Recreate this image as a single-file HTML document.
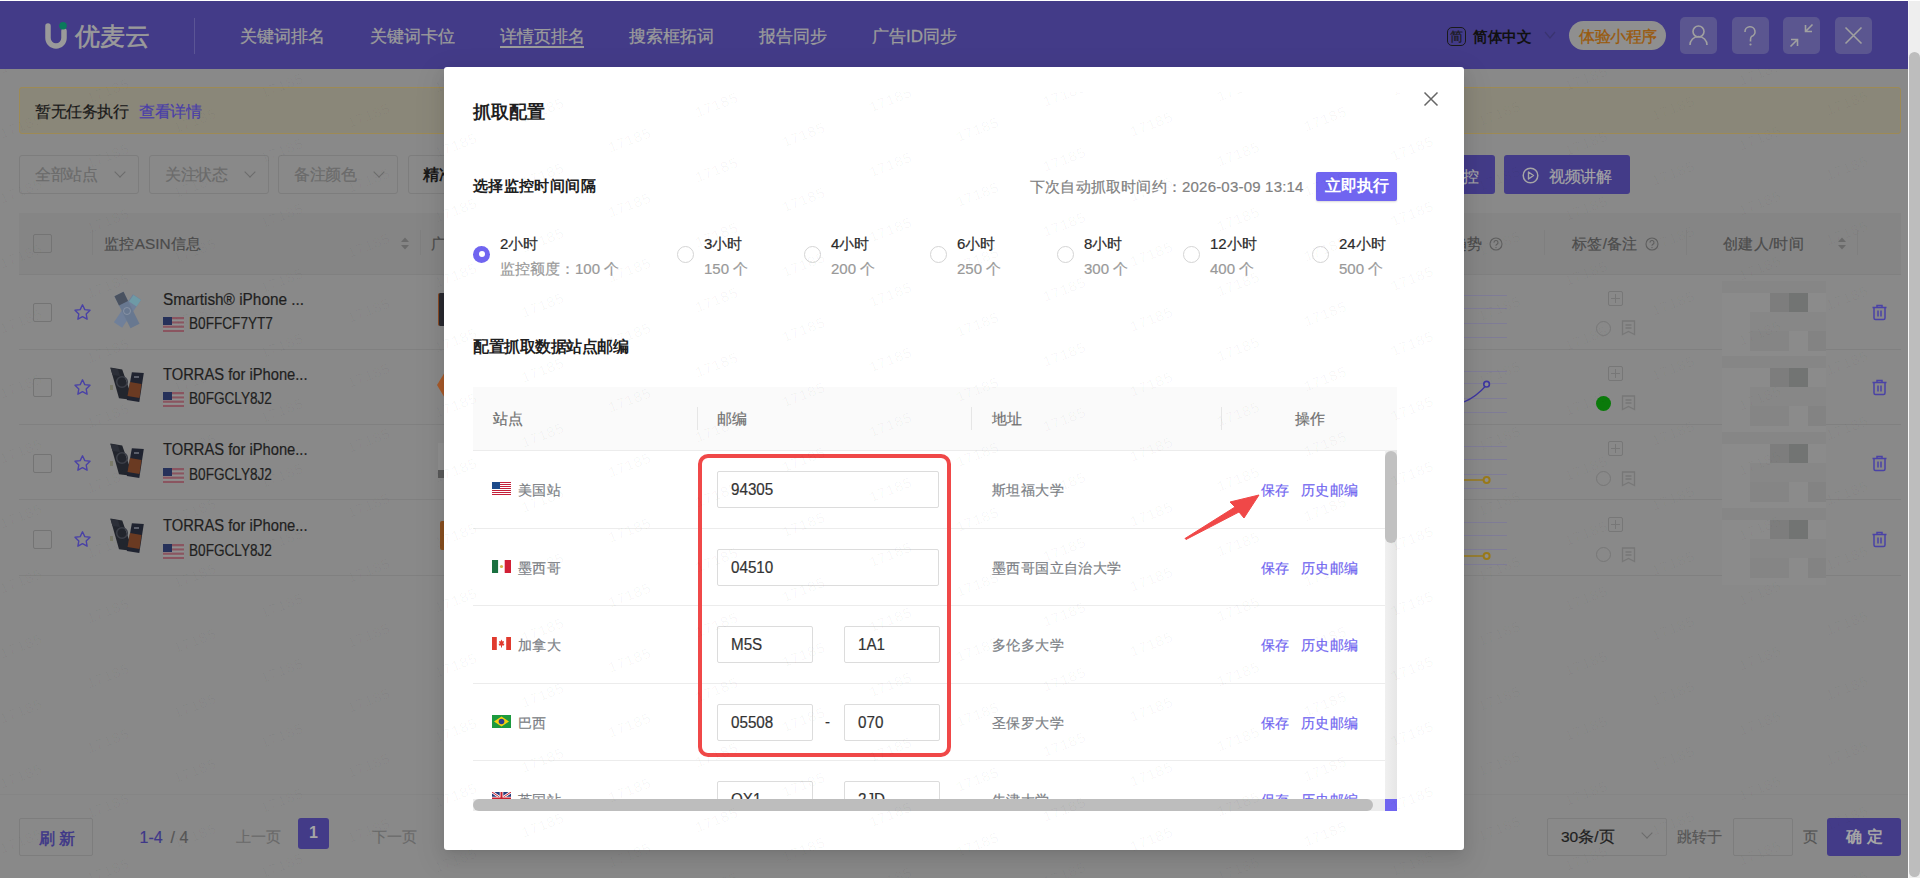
<!DOCTYPE html>
<html><head><meta charset="utf-8">
<style>
*{box-sizing:border-box;margin:0;padding:0}
html,body{width:1920px;height:878px;overflow:hidden}
body{background:#898989;font-family:"Liberation Sans",sans-serif;position:relative;color:#222}
.a{position:absolute;white-space:nowrap;-webkit-text-stroke-width:.2px}
.t{line-height:20px;height:20px}
/* header */
#hdr{left:0;top:1px;width:1908px;height:68px;background:#433B88}
.nav{top:27px;font-size:17px;color:#9b9b9b;line-height:20px;-webkit-text-stroke:.3px #9b9b9b}
.hbtn{top:17px;width:37px;height:37px;border-radius:5px;background:#5b5690}
.hbtn svg{position:absolute;left:0;top:0}
/* page */
.sel{top:155px;height:39px;border:1px solid #7d7d7d;border-radius:3px;width:120px}
.sel span{position:absolute;left:15px;top:9px;font-size:16px;line-height:20px;color:#6b6b6b;transform:scale(.97);transform-origin:0 0}
.chev{position:absolute;width:8px;height:8px;border-right:1px solid #6b6b6b;border-bottom:1px solid #6b6b6b;transform:rotate(45deg)}
.cb{width:19px;height:19px;border:1px solid #747474;border-radius:2px}
.inp{height:37px;border:1px solid #dcdcdc;border-radius:2px;background:#fff}
.inp span{position:absolute;left:13px;top:8px;font-size:16px;line-height:20px;color:#333;transform:scaleX(.95);transform-origin:0 0}
#mask{left:0;top:0;width:1908px;height:878px}
#modal{left:444px;top:67px;width:1020px;height:783px;background:#fff;border-radius:3px;box-shadow:0 3px 6px -4px rgba(0,0,0,.12),0 6px 16px 0 rgba(0,0,0,.08),0 9px 28px 8px rgba(0,0,0,.05);overflow:hidden}
#sb{left:1908px;top:1px;width:12px;height:877px;background:#eeeeee;border-left:1px solid #fafafa}
#topline{left:0;top:0;width:1920px;height:1px;background:#fff}
#sbthumb{left:1909px;top:52px;width:11px;height:825px;background:#bdbdbd;border-radius:6px}
</style></head><body>

<!-- ================= HEADER ================= -->
<div id="hdr" class="a">
</div>
<!-- logo -->
<svg class="a" style="left:43px;top:18px" width="30" height="34" viewBox="0 0 30 34">
  <path d="M5 8 V20 A8 8 0 0 0 21 20 V13" fill="none" stroke="#9a9a9a" stroke-width="5.5" stroke-linecap="round"/>
  <circle cx="20" cy="7.8" r="3.8" fill="#0b7a5c"/>
</svg>
<div class="a" style="left:75px;top:21px;font-size:25px;line-height:30px;color:#9a9a9a;-webkit-text-stroke:.6px #9a9a9a">优麦云</div>
<div class="a" style="left:194px;top:18px;width:1px;height:36px;background:#5b5595"></div>
<div class="a nav" style="left:240px">关键词排名</div>
<div class="a nav" style="left:370px">关键词卡位</div>
<div class="a nav" style="left:500px">详情页排名</div>
<div class="a" style="left:500px;top:46px;width:84px;height:2px;background:#9b9b9b"></div>
<div class="a nav" style="left:629px">搜索框拓词</div>
<div class="a nav" style="left:759px">报告同步</div>
<div class="a nav" style="left:872px">广告ID同步</div>

<!-- language -->
<div class="a" style="left:1447px;top:27px;width:19px;height:19px;border:1.5px solid #1a1a1a;border-radius:5px"></div>
<div class="a" style="left:1450px;top:29px;font-size:13px;line-height:15px;color:#1a1a1a">简</div>
<div class="a" style="left:1472.5px;top:27px;font-size:15px;line-height:20px;font-weight:bold;-webkit-text-stroke-width:0;color:#111;transform:scaleX(.97);transform-origin:0 0">简体中文</div>
<svg class="a" style="left:1544px;top:31px" width="12" height="9"><path d="M1 1 L6 7 L11 1" fill="none" stroke="#3a3470" stroke-width="1.2"/></svg>
<div class="a" style="left:1569px;top:21px;width:97px;height:29px;border-radius:15px;background:#8f8f8f"></div>
<div class="a" style="left:1578.5px;top:27px;font-size:16px;line-height:20px;color:#9a5a0c;-webkit-text-stroke:.3px #9a5a0c;transform:scale(.97);transform-origin:0 0">体验小程序</div>
<!-- header buttons -->
<div class="a hbtn" style="left:1680px">
 <svg width="37" height="37"><circle cx="18.5" cy="14.5" r="5.5" fill="none" stroke="#a0a0a0" stroke-width="1.6"/><path d="M10 28 A8.5 8.5 0 0 1 27 28" fill="none" stroke="#a0a0a0" stroke-width="1.6"/></svg>
</div>
<div class="a hbtn" style="left:1732px">
 <svg width="37" height="37"><path d="M13 15 A5 5 0 1 1 19.5 19.5 Q18.5 20.5 18.5 23 V24.5" fill="none" stroke="#a0a0a0" stroke-width="1.6"/><circle cx="18.5" cy="27.5" r="1.1" fill="#a0a0a0"/></svg>
</div>
<div class="a hbtn" style="left:1783px">
 <svg width="37" height="37"><path d="M22.5 8 V14.5 H29 M22.5 14.5 L29.5 7.5 M14.5 29 V22.5 H8 M14.5 22.5 L7.5 29.5" fill="none" stroke="#a0a0a0" stroke-width="1.6"/></svg>
</div>
<div class="a hbtn" style="left:1835px">
 <svg width="37" height="37"><path d="M10.5 10.5 L26.5 26.5 M26.5 10.5 L10.5 26.5" fill="none" stroke="#a0a0a0" stroke-width="1.6"/></svg>
</div>


<!-- ================= PAGE ================= -->
<div id="page">
<div class="a" style="left:19px;top:87px;width:1882px;height:47px;background:#8a8779;border:1px solid #9d8a55;border-radius:3px"></div>
<div class="a" style="left:35px;top:101.5px;font-size:16px;line-height:20px;color:#1a1a1a;transform:scale(0.97);transform-origin:0 0;">暂无任务执行</div>
<div class="a" style="left:138.5px;top:101.5px;font-size:16px;line-height:20px;color:#4a3fa8;transform:scale(0.97);transform-origin:0 0;">查看详情</div>
<div class="a sel" style="left:19px;width:120px"><span>全部站点</span><i class="chev" style="left:96px;top:12px"></i></div>
<div class="a sel" style="left:149px;width:120px"><span>关注状态</span><i class="chev" style="left:96px;top:12px"></i></div>
<div class="a sel" style="left:278px;width:120px"><span>备注颜色</span><i class="chev" style="left:96px;top:12px"></i></div>
<div class="a sel" style="left:408px;width:120px"><span style="color:#1a1a1a;font-weight:bold;-webkit-text-stroke-width:0;left:14px">精准搜索</span></div>
<div class="a" style="left:1380px;top:155px;width:115px;height:39px;background:#433B88;border-radius:3px"></div>
<div class="a" style="left:1416px;top:167px;font-size:16px;line-height:20px;color:#a5a5a5;transform:scale(0.97);transform-origin:0 0;font-weight:500">开启监控</div>
<div class="a" style="left:1504px;top:155px;width:126px;height:39px;background:#433B88;border-radius:3px"></div>
<svg class="a" style="left:1521px;top:166px" width="19" height="19"><circle cx="9.5" cy="9.5" r="7.3" fill="none" stroke="#a5a5a5" stroke-width="1.5"/><path d="M7.5 6 L12.5 9.5 L7.5 13 Z" fill="none" stroke="#a5a5a5" stroke-width="1.4" stroke-linejoin="round"/></svg>
<div class="a" style="left:1549px;top:167px;font-size:16px;line-height:20px;color:#a5a5a5;transform:scale(0.97);transform-origin:0 0;font-weight:500">视频讲解</div>
<div class="a" style="left:19px;top:213px;width:1882px;height:61px;background:#858585;"></div>
<div class="a" style="left:19px;top:274px;width:1882px;height:1px;background:#808080;"></div>
<div class="a cb" style="left:33px;top:234px"></div>
<div class="a" style="left:92px;top:230px;width:1px;height:25px;background:#7f7f7f;"></div>
<div class="a" style="left:420px;top:230px;width:1px;height:25px;background:#7f7f7f;"></div>
<div class="a" style="left:1544px;top:230px;width:1px;height:25px;background:#7f7f7f;"></div>
<div class="a" style="left:1686px;top:230px;width:1px;height:25px;background:#7f7f7f;"></div>
<div class="a" style="left:1857px;top:230px;width:1px;height:25px;background:#7f7f7f;"></div>
<div class="a" style="left:104px;top:234.5px;font-size:16px;line-height:20px;color:#4b4b4b;transform:scale(0.96);transform-origin:0 0;">监控ASIN信息</div>
<svg class="a" style="left:400px;top:236px" width="10" height="15"><path d="M1 6 L5 1.5 L9 6 Z M1 9 L5 13.5 L9 9 Z" fill="#6a6a6a"/></svg>
<div class="a" style="left:431px;top:234.5px;font-size:16px;line-height:20px;color:#4b4b4b;transform:scale(0.96);transform-origin:0 0;">广告</div>
<div class="a" style="left:1452px;top:234.5px;font-size:16px;line-height:20px;color:#4b4b4b;transform:scale(0.96);transform-origin:0 0;">趋势</div>
<svg class="a" style="left:1489px;top:237px" width="14" height="14"><circle cx="7" cy="7" r="6" fill="none" stroke="#5e5e5e" stroke-width="1.1"/><path d="M5 5.6 A2 2 0 1 1 7.6 7.4 Q7 7.8 7 8.8" fill="none" stroke="#5e5e5e" stroke-width="1.1"/><circle cx="7" cy="10.6" r=".7" fill="#5e5e5e"/></svg>
<div class="a" style="left:1572px;top:234.5px;font-size:16px;line-height:20px;color:#4b4b4b;transform:scale(0.96);transform-origin:0 0;">标签/备注</div>
<svg class="a" style="left:1645px;top:237px" width="14" height="14"><circle cx="7" cy="7" r="6" fill="none" stroke="#5e5e5e" stroke-width="1.1"/><path d="M5 5.6 A2 2 0 1 1 7.6 7.4 Q7 7.8 7 8.8" fill="none" stroke="#5e5e5e" stroke-width="1.1"/><circle cx="7" cy="10.6" r=".7" fill="#5e5e5e"/></svg>
<div class="a" style="left:1723px;top:234.5px;font-size:16px;line-height:20px;color:#4b4b4b;transform:scale(0.96);transform-origin:0 0;">创建人/时间</div>
<svg class="a" style="left:1837px;top:236px" width="10" height="15"><path d="M1 6 L5 1.5 L9 6 Z M1 9 L5 13.5 L9 9 Z" fill="#6a6a6a"/></svg>
<div class="a" style="left:19px;top:348.6px;width:1882px;height:1px;background:#808080;"></div>
<div class="a cb" style="left:33px;top:303.0px"></div>
<svg class="a" style="left:73px;top:303.0px" width="19" height="19" viewBox="0 0 19 19"><path d="M9.5 1.8 L11.8 6.6 L17 7.3 L13.2 11 L14.1 16.2 L9.5 13.7 L4.9 16.2 L5.8 11 L2 7.3 L7.2 6.6 Z" fill="none" stroke="#4a42a6" stroke-width="1.4" stroke-linejoin="round"/></svg>
<svg class="a" style="left:100px;top:285.0px" width="50" height="50" viewBox="100 285 50 50"><path d="M141.1 299.8 L132.9 294.2 L113.9 322.2 L122.1 327.8 Z" fill="#70809a"/><path d="M141 300 L133.5 295 L129 301.5 L136.5 306.5Z" fill="#6e9aa6"/><path d="M114.5 296.2 L123.5 291.8 L139.5 323.8 L130.5 328.2 Z" fill="#687890"/><path d="M114.5 296.2 L123.5 291.8 L128 301 L119 305.4 Z" fill="#4a5260"/><circle cx="127" cy="311" r="3.5" fill="none" stroke="#8e98a8" stroke-width=".8"/></svg>
<div class="a" style="left:163px;top:289.5px;font-size:16px;line-height:20px;color:#1f1f1f;transform:scaleX(0.96);transform-origin:0 0">Smartish® iPhone ...</div>
<svg class="a" style="left:163px;top:317.0px" width="21" height="15" viewBox="0 0 21 15"><rect width="21" height="15" fill="#8a5560"/><rect y="2.3" width="21" height="2.1" fill="#8f8f8f"/><rect y="6.5" width="21" height="2.1" fill="#8f8f8f"/><rect y="10.8" width="21" height="2.1" fill="#8f8f8f"/><rect width="9" height="8" fill="#26315a"/></svg>
<div class="a" style="left:188.5px;top:314.0px;font-size:16px;line-height:20px;color:#1f1f1f;transform:scaleX(.85);transform-origin:0 0">B0FFCF7YT7</div>
<div class="a" style="left:438px;top:293px;width:8px;height:33px;background:#2a2a30;border-radius:2px;border-left:1.5px solid #8a4a22"></div>
<div class="a" style="left:1464px;top:295.4px;width:43px;height:1px;background:#7f7c96;"></div>
<div class="a" style="left:1464px;top:308.0px;width:43px;height:1px;background:#7f7c96;"></div>
<div class="a" style="left:1464px;top:322.7px;width:43px;height:1px;background:#7f7c96;"></div>
<div class="a" style="left:1464px;top:337.0px;width:43px;height:1px;background:#7f7c96;"></div>
<div class="a" style="left:1608px;top:290.5px;width:15px;height:15px;background:transparent;border:1px solid #777;border-radius:2px"></div>
<div class="a" style="left:1611px;top:297.5px;width:9px;height:1px;background:#777;"></div>
<div class="a" style="left:1615px;top:293.5px;width:1px;height:9px;background:#777;"></div>
<div class="a" style="left:1596px;top:320.5px;width:15px;height:15px;background:transparent;border-radius:50%;border:1.3px solid #777"></div>
<svg class="a" style="left:1621px;top:320.0px" width="15" height="16" viewBox="0 0 15 16"><path d="M1.5 1 H13.5 V14.5 L7.5 11.5 L1.5 14.5 Z M4.5 5 H10.5 M4.5 8 H10.5" fill="none" stroke="#777" stroke-width="1.3"/></svg>
<div class="a" style="left:1722px;top:281.0px;width:104px;height:77px;background:#8b8b8b;"></div>
<div class="a" style="left:1722px;top:281.0px;width:104px;height:12px;background:#868686;"></div>
<div class="a" style="left:1770px;top:293.0px;width:19px;height:19px;background:#7d7d7d;"></div>
<div class="a" style="left:1789px;top:293.0px;width:19px;height:19px;background:#727473;"></div>
<div class="a" style="left:1750px;top:312.0px;width:76px;height:19px;background:#878787;"></div>
<div class="a" style="left:1750px;top:331.0px;width:39px;height:20px;background:#858585;"></div>
<div class="a" style="left:1808px;top:331.0px;width:18px;height:20px;background:#838383;"></div>
<svg class="a" style="left:1870px;top:303.0px" width="19" height="19" viewBox="0 0 19 19"><path d="M2.5 4.5 H16.5 M7 4.5 V2.5 H12 V4.5 M4 4.5 V15 Q4 16.5 5.5 16.5 H13.5 Q15 16.5 15 15 V4.5 M8 7.5 V13.5 M11 7.5 V13.5" fill="none" stroke="#4a42a6" stroke-width="1.5"/></svg>
<div class="a" style="left:19px;top:423.7px;width:1882px;height:1px;background:#808080;"></div>
<div class="a cb" style="left:33px;top:378.1px"></div>
<svg class="a" style="left:73px;top:378.1px" width="19" height="19" viewBox="0 0 19 19"><path d="M9.5 1.8 L11.8 6.6 L17 7.3 L13.2 11 L14.1 16.2 L9.5 13.7 L4.9 16.2 L5.8 11 L2 7.3 L7.2 6.6 Z" fill="none" stroke="#4a42a6" stroke-width="1.4" stroke-linejoin="round"/></svg>
<svg class="a" style="left:100px;top:360.0px" width="50" height="50" viewBox="100 360 50 50"><path d="M110.3 367.4 L122.2 369.4 L133 400 L119 398.2 Z" fill="#22252d"/><circle cx="122" cy="382" r="5.3" fill="none" stroke="#3c3f48" stroke-width="1.6"/><path d="M110.5 368 L118 369.3 L120 376 L112.5 375Z" fill="#2c2f38"/><path d="M131.9 372.2 L143.8 373.1 L139.3 402.1 L126.8 399.9 Z" fill="#1f2330"/><path d="M130 382 L141.5 384 L139.5 398 L127.5 396 Z" fill="#6a3a22"/><rect x="134" y="376" width="5" height="2" fill="#5a5e6a"/><rect x="110" y="385" width="3" height="5" fill="#7a7a6a"/></svg>
<div class="a" style="left:163px;top:364.6px;font-size:16px;line-height:20px;color:#1f1f1f;transform:scaleX(0.92);transform-origin:0 0">TORRAS for iPhone...</div>
<svg class="a" style="left:163px;top:392.1px" width="21" height="15" viewBox="0 0 21 15"><rect width="21" height="15" fill="#8a5560"/><rect y="2.3" width="21" height="2.1" fill="#8f8f8f"/><rect y="6.5" width="21" height="2.1" fill="#8f8f8f"/><rect y="10.8" width="21" height="2.1" fill="#8f8f8f"/><rect width="9" height="8" fill="#26315a"/></svg>
<div class="a" style="left:188.5px;top:389.1px;font-size:16px;line-height:20px;color:#1f1f1f;transform:scaleX(.85);transform-origin:0 0">B0FGCLY8J2</div>
<svg class="a" style="left:436px;top:371px" width="10" height="30"><path d="M1 14 L9 1 L10 29 Z" fill="#a85a2a"/></svg>
<div class="a" style="left:1464px;top:370.5px;width:43px;height:1px;background:#7f7c96;"></div>
<div class="a" style="left:1464px;top:383.1px;width:43px;height:1px;background:#7f7c96;"></div>
<div class="a" style="left:1464px;top:397.8px;width:43px;height:1px;background:#7f7c96;"></div>
<div class="a" style="left:1464px;top:412.1px;width:43px;height:1px;background:#7f7c96;"></div>
<svg class="a" style="left:1464px;top:375.1px" width="30" height="30"><path d="M0 27 Q12 22 22.6 10" fill="none" stroke="#3e36a0" stroke-width="1.3"/><circle cx="22.6" cy="9.2" r="2.8" fill="#8f8f8f" stroke="#3e36a0" stroke-width="1.6"/></svg>
<div class="a" style="left:1608px;top:365.6px;width:15px;height:15px;background:transparent;border:1px solid #777;border-radius:2px"></div>
<div class="a" style="left:1611px;top:372.6px;width:9px;height:1px;background:#777;"></div>
<div class="a" style="left:1615px;top:368.6px;width:1px;height:9px;background:#777;"></div>
<div class="a" style="left:1596px;top:395.6px;width:15px;height:15px;background:#0a7a0a;border-radius:50%"></div>
<svg class="a" style="left:1621px;top:395.1px" width="15" height="16" viewBox="0 0 15 16"><path d="M1.5 1 H13.5 V14.5 L7.5 11.5 L1.5 14.5 Z M4.5 5 H10.5 M4.5 8 H10.5" fill="none" stroke="#777" stroke-width="1.3"/></svg>
<div class="a" style="left:1722px;top:356.1px;width:104px;height:77px;background:#8b8b8b;"></div>
<div class="a" style="left:1722px;top:356.1px;width:104px;height:12px;background:#868686;"></div>
<div class="a" style="left:1770px;top:368.1px;width:19px;height:19px;background:#7d7d7d;"></div>
<div class="a" style="left:1789px;top:368.1px;width:19px;height:19px;background:#727473;"></div>
<div class="a" style="left:1750px;top:387.1px;width:76px;height:19px;background:#878787;"></div>
<div class="a" style="left:1750px;top:406.1px;width:39px;height:20px;background:#858585;"></div>
<div class="a" style="left:1808px;top:406.1px;width:18px;height:20px;background:#838383;"></div>
<svg class="a" style="left:1870px;top:378.1px" width="19" height="19" viewBox="0 0 19 19"><path d="M2.5 4.5 H16.5 M7 4.5 V2.5 H12 V4.5 M4 4.5 V15 Q4 16.5 5.5 16.5 H13.5 Q15 16.5 15 15 V4.5 M8 7.5 V13.5 M11 7.5 V13.5" fill="none" stroke="#4a42a6" stroke-width="1.5"/></svg>
<div class="a" style="left:19px;top:499.4px;width:1882px;height:1px;background:#808080;"></div>
<div class="a cb" style="left:33px;top:453.8px"></div>
<svg class="a" style="left:73px;top:453.8px" width="19" height="19" viewBox="0 0 19 19"><path d="M9.5 1.8 L11.8 6.6 L17 7.3 L13.2 11 L14.1 16.2 L9.5 13.7 L4.9 16.2 L5.8 11 L2 7.3 L7.2 6.6 Z" fill="none" stroke="#4a42a6" stroke-width="1.4" stroke-linejoin="round"/></svg>
<svg class="a" style="left:100px;top:435.70000000000005px" width="50" height="50" viewBox="100 360 50 50"><path d="M110.3 367.4 L122.2 369.4 L133 400 L119 398.2 Z" fill="#22252d"/><circle cx="122" cy="382" r="5.3" fill="none" stroke="#3c3f48" stroke-width="1.6"/><path d="M110.5 368 L118 369.3 L120 376 L112.5 375Z" fill="#2c2f38"/><path d="M131.9 372.2 L143.8 373.1 L139.3 402.1 L126.8 399.9 Z" fill="#1f2330"/><path d="M130 382 L141.5 384 L139.5 398 L127.5 396 Z" fill="#6a3a22"/><rect x="134" y="376" width="5" height="2" fill="#5a5e6a"/><rect x="110" y="385" width="3" height="5" fill="#7a7a6a"/></svg>
<div class="a" style="left:163px;top:440.3px;font-size:16px;line-height:20px;color:#1f1f1f;transform:scaleX(0.92);transform-origin:0 0">TORRAS for iPhone...</div>
<svg class="a" style="left:163px;top:467.8px" width="21" height="15" viewBox="0 0 21 15"><rect width="21" height="15" fill="#8a5560"/><rect y="2.3" width="21" height="2.1" fill="#8f8f8f"/><rect y="6.5" width="21" height="2.1" fill="#8f8f8f"/><rect y="10.8" width="21" height="2.1" fill="#8f8f8f"/><rect width="9" height="8" fill="#26315a"/></svg>
<div class="a" style="left:188.5px;top:464.8px;font-size:16px;line-height:20px;color:#1f1f1f;transform:scaleX(.85);transform-origin:0 0">B0FGCLY8J2</div>
<div class="a" style="left:438px;top:443px;width:8px;height:35px;background:#8f8f8f;"></div>
<div class="a" style="left:438px;top:470px;width:8px;height:8px;background:#5a5a5a;"></div>
<div class="a" style="left:1464px;top:446.2px;width:43px;height:1px;background:#7f7c96;"></div>
<div class="a" style="left:1464px;top:458.8px;width:43px;height:1px;background:#7f7c96;"></div>
<div class="a" style="left:1464px;top:473.5px;width:43px;height:1px;background:#7f7c96;"></div>
<div class="a" style="left:1464px;top:487.8px;width:43px;height:1px;background:#7f7c96;"></div>
<svg class="a" style="left:1464px;top:473.8px" width="30" height="30"><path d="M0 6 H20" fill="none" stroke="#9a7a1a" stroke-width="1.5"/><circle cx="22.6" cy="6" r="3" fill="#8f8f8f" stroke="#9a7a1a" stroke-width="2"/></svg>
<div class="a" style="left:1608px;top:441.3px;width:15px;height:15px;background:transparent;border:1px solid #777;border-radius:2px"></div>
<div class="a" style="left:1611px;top:448.3px;width:9px;height:1px;background:#777;"></div>
<div class="a" style="left:1615px;top:444.3px;width:1px;height:9px;background:#777;"></div>
<div class="a" style="left:1596px;top:471.3px;width:15px;height:15px;background:transparent;border-radius:50%;border:1.3px solid #777"></div>
<svg class="a" style="left:1621px;top:470.8px" width="15" height="16" viewBox="0 0 15 16"><path d="M1.5 1 H13.5 V14.5 L7.5 11.5 L1.5 14.5 Z M4.5 5 H10.5 M4.5 8 H10.5" fill="none" stroke="#777" stroke-width="1.3"/></svg>
<div class="a" style="left:1722px;top:431.8px;width:104px;height:77px;background:#8b8b8b;"></div>
<div class="a" style="left:1722px;top:431.8px;width:104px;height:12px;background:#868686;"></div>
<div class="a" style="left:1770px;top:443.8px;width:19px;height:19px;background:#7d7d7d;"></div>
<div class="a" style="left:1789px;top:443.8px;width:19px;height:19px;background:#727473;"></div>
<div class="a" style="left:1750px;top:462.8px;width:76px;height:19px;background:#878787;"></div>
<div class="a" style="left:1750px;top:481.8px;width:39px;height:20px;background:#858585;"></div>
<div class="a" style="left:1808px;top:481.8px;width:18px;height:20px;background:#838383;"></div>
<svg class="a" style="left:1870px;top:453.8px" width="19" height="19" viewBox="0 0 19 19"><path d="M2.5 4.5 H16.5 M7 4.5 V2.5 H12 V4.5 M4 4.5 V15 Q4 16.5 5.5 16.5 H13.5 Q15 16.5 15 15 V4.5 M8 7.5 V13.5 M11 7.5 V13.5" fill="none" stroke="#4a42a6" stroke-width="1.5"/></svg>
<div class="a" style="left:19px;top:575.1px;width:1882px;height:1px;background:#808080;"></div>
<div class="a cb" style="left:33px;top:529.5px"></div>
<svg class="a" style="left:73px;top:529.5px" width="19" height="19" viewBox="0 0 19 19"><path d="M9.5 1.8 L11.8 6.6 L17 7.3 L13.2 11 L14.1 16.2 L9.5 13.7 L4.9 16.2 L5.8 11 L2 7.3 L7.2 6.6 Z" fill="none" stroke="#4a42a6" stroke-width="1.4" stroke-linejoin="round"/></svg>
<svg class="a" style="left:100px;top:511.4px" width="50" height="50" viewBox="100 360 50 50"><path d="M110.3 367.4 L122.2 369.4 L133 400 L119 398.2 Z" fill="#22252d"/><circle cx="122" cy="382" r="5.3" fill="none" stroke="#3c3f48" stroke-width="1.6"/><path d="M110.5 368 L118 369.3 L120 376 L112.5 375Z" fill="#2c2f38"/><path d="M131.9 372.2 L143.8 373.1 L139.3 402.1 L126.8 399.9 Z" fill="#1f2330"/><path d="M130 382 L141.5 384 L139.5 398 L127.5 396 Z" fill="#6a3a22"/><rect x="134" y="376" width="5" height="2" fill="#5a5e6a"/><rect x="110" y="385" width="3" height="5" fill="#7a7a6a"/></svg>
<div class="a" style="left:163px;top:516.0px;font-size:16px;line-height:20px;color:#1f1f1f;transform:scaleX(0.92);transform-origin:0 0">TORRAS for iPhone...</div>
<svg class="a" style="left:163px;top:543.5px" width="21" height="15" viewBox="0 0 21 15"><rect width="21" height="15" fill="#8a5560"/><rect y="2.3" width="21" height="2.1" fill="#8f8f8f"/><rect y="6.5" width="21" height="2.1" fill="#8f8f8f"/><rect y="10.8" width="21" height="2.1" fill="#8f8f8f"/><rect width="9" height="8" fill="#26315a"/></svg>
<div class="a" style="left:188.5px;top:540.5px;font-size:16px;line-height:20px;color:#1f1f1f;transform:scaleX(.85);transform-origin:0 0">B0FGCLY8J2</div>
<div class="a" style="left:440px;top:521px;width:6px;height:29px;background:#8a5020;border-radius:2px"></div>
<div class="a" style="left:1464px;top:521.9px;width:43px;height:1px;background:#7f7c96;"></div>
<div class="a" style="left:1464px;top:534.5px;width:43px;height:1px;background:#7f7c96;"></div>
<div class="a" style="left:1464px;top:549.2px;width:43px;height:1px;background:#7f7c96;"></div>
<div class="a" style="left:1464px;top:563.5px;width:43px;height:1px;background:#7f7c96;"></div>
<svg class="a" style="left:1464px;top:549.5px" width="30" height="30"><path d="M0 6 H20" fill="none" stroke="#9a7a1a" stroke-width="1.5"/><circle cx="22.6" cy="6" r="3" fill="#8f8f8f" stroke="#9a7a1a" stroke-width="2"/></svg>
<div class="a" style="left:1608px;top:517.0px;width:15px;height:15px;background:transparent;border:1px solid #777;border-radius:2px"></div>
<div class="a" style="left:1611px;top:524.0px;width:9px;height:1px;background:#777;"></div>
<div class="a" style="left:1615px;top:520.0px;width:1px;height:9px;background:#777;"></div>
<div class="a" style="left:1596px;top:547.0px;width:15px;height:15px;background:transparent;border-radius:50%;border:1.3px solid #777"></div>
<svg class="a" style="left:1621px;top:546.5px" width="15" height="16" viewBox="0 0 15 16"><path d="M1.5 1 H13.5 V14.5 L7.5 11.5 L1.5 14.5 Z M4.5 5 H10.5 M4.5 8 H10.5" fill="none" stroke="#777" stroke-width="1.3"/></svg>
<div class="a" style="left:1722px;top:507.5px;width:104px;height:77px;background:#8b8b8b;"></div>
<div class="a" style="left:1722px;top:507.5px;width:104px;height:12px;background:#868686;"></div>
<div class="a" style="left:1770px;top:519.5px;width:19px;height:19px;background:#7d7d7d;"></div>
<div class="a" style="left:1789px;top:519.5px;width:19px;height:19px;background:#727473;"></div>
<div class="a" style="left:1750px;top:538.5px;width:76px;height:19px;background:#878787;"></div>
<div class="a" style="left:1750px;top:557.5px;width:39px;height:20px;background:#858585;"></div>
<div class="a" style="left:1808px;top:557.5px;width:18px;height:20px;background:#838383;"></div>
<svg class="a" style="left:1870px;top:529.5px" width="19" height="19" viewBox="0 0 19 19"><path d="M2.5 4.5 H16.5 M7 4.5 V2.5 H12 V4.5 M4 4.5 V15 Q4 16.5 5.5 16.5 H13.5 Q15 16.5 15 15 V4.5 M8 7.5 V13.5 M11 7.5 V13.5" fill="none" stroke="#4a42a6" stroke-width="1.5"/></svg>
<div class="a" style="left:0px;top:794px;width:1908px;height:1px;background:#858585;"></div>
<div class="a" style="left:19px;top:818px;width:74px;height:38px;background:transparent;border:1px solid #7d7d7d;border-radius:2px"></div>
<div class="a" style="left:39px;top:828.5px;font-size:16px;line-height:20px;color:#3e3788;letter-spacing:4px;-webkit-text-stroke:.5px #3e3788">刷新</div>
<div class="a" style="left:139.5px;top:827.5px;font-size:16px;line-height:20px;color:#3e3788;">1-4</div>
<div class="a" style="left:170.5px;top:827.5px;font-size:16px;line-height:20px;color:#555;">/ 4</div>
<div class="a" style="left:236px;top:827px;font-size:15px;line-height:20px;color:#6a6a6a;">上一页</div>
<div class="a" style="left:298px;top:818px;width:31px;height:31px;background:#433B88;border-radius:3px"></div>
<div class="a" style="left:298px;top:823px;font-size:16px;line-height:20px;color:#a5a5a5;font-weight:bold;-webkit-text-stroke-width:0;width:31px;text-align:center">1</div>
<div class="a" style="left:372px;top:827px;font-size:15px;line-height:20px;color:#6a6a6a;">下一页</div>
<div class="a" style="left:1547px;top:818px;width:120px;height:38px;background:transparent;border:1px solid #7d7d7d;border-radius:2px"></div>
<div class="a" style="left:1561px;top:827px;font-size:15.5px;line-height:20px;color:#1f1f1f;">30条/页</div>
<i class="a chev" style="left:1643px;top:829px"></i>
<div class="a" style="left:1677px;top:827px;font-size:15px;line-height:20px;color:#555;">跳转于</div>
<div class="a" style="left:1733px;top:818px;width:60px;height:38px;background:transparent;border:1px solid #7d7d7d;border-radius:2px"></div>
<div class="a" style="left:1803px;top:827px;font-size:15px;line-height:20px;color:#555;">页</div>
<div class="a" style="left:1827px;top:818px;width:74px;height:38px;background:#433B88;border-radius:3px"></div>
<div class="a" style="left:1827px;top:827px;font-size:16px;line-height:20px;color:#a5a5a5;font-weight:bold;-webkit-text-stroke-width:0;width:74px;text-align:center;letter-spacing:5px;text-indent:5px">确定</div>
</div>
<div class="a" style="left:0;top:69px;width:1908px;height:809px;overflow:hidden"><svg class="a" style="left:0px;top:-69px;pointer-events:none" width="1920" height="878" viewBox="0 0 1920 878"><g font-family="Liberation Mono" font-size="15" fill="rgba(0,0,0,0.03)" text-anchor="middle"><text transform="translate(20.6 61.0) rotate(-21)" dy="5.2">17185</text><text transform="translate(20.6 126.0) rotate(-21)" dy="5.2">17185</text><text transform="translate(20.6 191.0) rotate(-21)" dy="5.2">17185</text><text transform="translate(20.6 256.0) rotate(-21)" dy="5.2">17185</text><text transform="translate(20.6 321.0) rotate(-21)" dy="5.2">17185</text><text transform="translate(20.6 386.0) rotate(-21)" dy="5.2">17185</text><text transform="translate(20.6 451.0) rotate(-21)" dy="5.2">17185</text><text transform="translate(20.6 516.0) rotate(-21)" dy="5.2">17185</text><text transform="translate(20.6 581.0) rotate(-21)" dy="5.2">17185</text><text transform="translate(20.6 646.0) rotate(-21)" dy="5.2">17185</text><text transform="translate(20.6 711.0) rotate(-21)" dy="5.2">17185</text><text transform="translate(20.6 776.0) rotate(-21)" dy="5.2">17185</text><text transform="translate(20.6 841.0) rotate(-21)" dy="5.2">17185</text><text transform="translate(20.6 906.0) rotate(-21)" dy="5.2">17185</text><text transform="translate(107.6 90.8) rotate(-21)" dy="5.2">17185</text><text transform="translate(107.6 155.8) rotate(-21)" dy="5.2">17185</text><text transform="translate(107.6 220.8) rotate(-21)" dy="5.2">17185</text><text transform="translate(107.6 285.8) rotate(-21)" dy="5.2">17185</text><text transform="translate(107.6 350.8) rotate(-21)" dy="5.2">17185</text><text transform="translate(107.6 415.8) rotate(-21)" dy="5.2">17185</text><text transform="translate(107.6 480.8) rotate(-21)" dy="5.2">17185</text><text transform="translate(107.6 545.8) rotate(-21)" dy="5.2">17185</text><text transform="translate(107.6 610.8) rotate(-21)" dy="5.2">17185</text><text transform="translate(107.6 675.8) rotate(-21)" dy="5.2">17185</text><text transform="translate(107.6 740.8) rotate(-21)" dy="5.2">17185</text><text transform="translate(107.6 805.8) rotate(-21)" dy="5.2">17185</text><text transform="translate(107.6 870.8) rotate(-21)" dy="5.2">17185</text><text transform="translate(107.6 935.8) rotate(-21)" dy="5.2">17185</text><text transform="translate(194.5 55.7) rotate(-21)" dy="5.2">17185</text><text transform="translate(194.5 120.7) rotate(-21)" dy="5.2">17185</text><text transform="translate(194.5 185.7) rotate(-21)" dy="5.2">17185</text><text transform="translate(194.5 250.7) rotate(-21)" dy="5.2">17185</text><text transform="translate(194.5 315.7) rotate(-21)" dy="5.2">17185</text><text transform="translate(194.5 380.7) rotate(-21)" dy="5.2">17185</text><text transform="translate(194.5 445.7) rotate(-21)" dy="5.2">17185</text><text transform="translate(194.5 510.7) rotate(-21)" dy="5.2">17185</text><text transform="translate(194.5 575.7) rotate(-21)" dy="5.2">17185</text><text transform="translate(194.5 640.7) rotate(-21)" dy="5.2">17185</text><text transform="translate(194.5 705.7) rotate(-21)" dy="5.2">17185</text><text transform="translate(194.5 770.7) rotate(-21)" dy="5.2">17185</text><text transform="translate(194.5 835.7) rotate(-21)" dy="5.2">17185</text><text transform="translate(194.5 900.7) rotate(-21)" dy="5.2">17185</text><text transform="translate(281.5 85.6) rotate(-21)" dy="5.2">17185</text><text transform="translate(281.5 150.6) rotate(-21)" dy="5.2">17185</text><text transform="translate(281.5 215.6) rotate(-21)" dy="5.2">17185</text><text transform="translate(281.5 280.6) rotate(-21)" dy="5.2">17185</text><text transform="translate(281.5 345.6) rotate(-21)" dy="5.2">17185</text><text transform="translate(281.5 410.6) rotate(-21)" dy="5.2">17185</text><text transform="translate(281.5 475.6) rotate(-21)" dy="5.2">17185</text><text transform="translate(281.5 540.5) rotate(-21)" dy="5.2">17185</text><text transform="translate(281.5 605.5) rotate(-21)" dy="5.2">17185</text><text transform="translate(281.5 670.5) rotate(-21)" dy="5.2">17185</text><text transform="translate(281.5 735.5) rotate(-21)" dy="5.2">17185</text><text transform="translate(281.5 800.5) rotate(-21)" dy="5.2">17185</text><text transform="translate(281.5 865.5) rotate(-21)" dy="5.2">17185</text><text transform="translate(281.5 930.5) rotate(-21)" dy="5.2">17185</text><text transform="translate(368.4 50.4) rotate(-21)" dy="5.2">17185</text><text transform="translate(368.4 115.4) rotate(-21)" dy="5.2">17185</text><text transform="translate(368.4 180.4) rotate(-21)" dy="5.2">17185</text><text transform="translate(368.4 245.4) rotate(-21)" dy="5.2">17185</text><text transform="translate(368.4 310.4) rotate(-21)" dy="5.2">17185</text><text transform="translate(368.4 375.4) rotate(-21)" dy="5.2">17185</text><text transform="translate(368.4 440.4) rotate(-21)" dy="5.2">17185</text><text transform="translate(368.4 505.4) rotate(-21)" dy="5.2">17185</text><text transform="translate(368.4 570.4) rotate(-21)" dy="5.2">17185</text><text transform="translate(368.4 635.4) rotate(-21)" dy="5.2">17185</text><text transform="translate(368.4 700.4) rotate(-21)" dy="5.2">17185</text><text transform="translate(368.4 765.4) rotate(-21)" dy="5.2">17185</text><text transform="translate(368.4 830.4) rotate(-21)" dy="5.2">17185</text><text transform="translate(368.4 895.4) rotate(-21)" dy="5.2">17185</text><text transform="translate(455.4 80.2) rotate(-21)" dy="5.2">17185</text><text transform="translate(455.4 145.2) rotate(-21)" dy="5.2">17185</text><text transform="translate(455.4 210.2) rotate(-21)" dy="5.2">17185</text><text transform="translate(455.4 275.2) rotate(-21)" dy="5.2">17185</text><text transform="translate(455.4 340.2) rotate(-21)" dy="5.2">17185</text><text transform="translate(455.4 405.2) rotate(-21)" dy="5.2">17185</text><text transform="translate(455.4 470.2) rotate(-21)" dy="5.2">17185</text><text transform="translate(455.4 535.2) rotate(-21)" dy="5.2">17185</text><text transform="translate(455.4 600.2) rotate(-21)" dy="5.2">17185</text><text transform="translate(455.4 665.2) rotate(-21)" dy="5.2">17185</text><text transform="translate(455.4 730.2) rotate(-21)" dy="5.2">17185</text><text transform="translate(455.4 795.2) rotate(-21)" dy="5.2">17185</text><text transform="translate(455.4 860.2) rotate(-21)" dy="5.2">17185</text><text transform="translate(455.4 925.2) rotate(-21)" dy="5.2">17185</text><text transform="translate(542.3 45.1) rotate(-21)" dy="5.2">17185</text><text transform="translate(542.3 110.1) rotate(-21)" dy="5.2">17185</text><text transform="translate(542.3 175.1) rotate(-21)" dy="5.2">17185</text><text transform="translate(542.3 240.1) rotate(-21)" dy="5.2">17185</text><text transform="translate(542.3 305.1) rotate(-21)" dy="5.2">17185</text><text transform="translate(542.3 370.1) rotate(-21)" dy="5.2">17185</text><text transform="translate(542.3 435.1) rotate(-21)" dy="5.2">17185</text><text transform="translate(542.3 500.1) rotate(-21)" dy="5.2">17185</text><text transform="translate(542.3 565.1) rotate(-21)" dy="5.2">17185</text><text transform="translate(542.3 630.1) rotate(-21)" dy="5.2">17185</text><text transform="translate(542.3 695.1) rotate(-21)" dy="5.2">17185</text><text transform="translate(542.3 760.1) rotate(-21)" dy="5.2">17185</text><text transform="translate(542.3 825.1) rotate(-21)" dy="5.2">17185</text><text transform="translate(542.3 890.1) rotate(-21)" dy="5.2">17185</text><text transform="translate(629.2 74.9) rotate(-21)" dy="5.2">17185</text><text transform="translate(629.2 139.9) rotate(-21)" dy="5.2">17185</text><text transform="translate(629.2 204.9) rotate(-21)" dy="5.2">17185</text><text transform="translate(629.2 269.9) rotate(-21)" dy="5.2">17185</text><text transform="translate(629.2 334.9) rotate(-21)" dy="5.2">17185</text><text transform="translate(629.2 399.9) rotate(-21)" dy="5.2">17185</text><text transform="translate(629.2 464.9) rotate(-21)" dy="5.2">17185</text><text transform="translate(629.2 530.0) rotate(-21)" dy="5.2">17185</text><text transform="translate(629.2 595.0) rotate(-21)" dy="5.2">17185</text><text transform="translate(629.2 660.0) rotate(-21)" dy="5.2">17185</text><text transform="translate(629.2 725.0) rotate(-21)" dy="5.2">17185</text><text transform="translate(629.2 790.0) rotate(-21)" dy="5.2">17185</text><text transform="translate(629.2 855.0) rotate(-21)" dy="5.2">17185</text><text transform="translate(629.2 920.0) rotate(-21)" dy="5.2">17185</text><text transform="translate(716.2 104.8) rotate(-21)" dy="5.2">17185</text><text transform="translate(716.2 169.8) rotate(-21)" dy="5.2">17185</text><text transform="translate(716.2 234.8) rotate(-21)" dy="5.2">17185</text><text transform="translate(716.2 299.8) rotate(-21)" dy="5.2">17185</text><text transform="translate(716.2 364.8) rotate(-21)" dy="5.2">17185</text><text transform="translate(716.2 429.8) rotate(-21)" dy="5.2">17185</text><text transform="translate(716.2 494.8) rotate(-21)" dy="5.2">17185</text><text transform="translate(716.2 559.8) rotate(-21)" dy="5.2">17185</text><text transform="translate(716.2 624.8) rotate(-21)" dy="5.2">17185</text><text transform="translate(716.2 689.8) rotate(-21)" dy="5.2">17185</text><text transform="translate(716.2 754.8) rotate(-21)" dy="5.2">17185</text><text transform="translate(716.2 819.8) rotate(-21)" dy="5.2">17185</text><text transform="translate(716.2 884.8) rotate(-21)" dy="5.2">17185</text><text transform="translate(803.2 69.7) rotate(-21)" dy="5.2">17185</text><text transform="translate(803.2 134.7) rotate(-21)" dy="5.2">17185</text><text transform="translate(803.2 199.7) rotate(-21)" dy="5.2">17185</text><text transform="translate(803.2 264.6) rotate(-21)" dy="5.2">17185</text><text transform="translate(803.2 329.6) rotate(-21)" dy="5.2">17185</text><text transform="translate(803.2 394.6) rotate(-21)" dy="5.2">17185</text><text transform="translate(803.2 459.6) rotate(-21)" dy="5.2">17185</text><text transform="translate(803.2 524.6) rotate(-21)" dy="5.2">17185</text><text transform="translate(803.2 589.6) rotate(-21)" dy="5.2">17185</text><text transform="translate(803.2 654.6) rotate(-21)" dy="5.2">17185</text><text transform="translate(803.2 719.6) rotate(-21)" dy="5.2">17185</text><text transform="translate(803.2 784.6) rotate(-21)" dy="5.2">17185</text><text transform="translate(803.2 849.6) rotate(-21)" dy="5.2">17185</text><text transform="translate(803.2 914.6) rotate(-21)" dy="5.2">17185</text><text transform="translate(890.1 99.5) rotate(-21)" dy="5.2">17185</text><text transform="translate(890.1 164.5) rotate(-21)" dy="5.2">17185</text><text transform="translate(890.1 229.5) rotate(-21)" dy="5.2">17185</text><text transform="translate(890.1 294.5) rotate(-21)" dy="5.2">17185</text><text transform="translate(890.1 359.5) rotate(-21)" dy="5.2">17185</text><text transform="translate(890.1 424.5) rotate(-21)" dy="5.2">17185</text><text transform="translate(890.1 489.5) rotate(-21)" dy="5.2">17185</text><text transform="translate(890.1 554.5) rotate(-21)" dy="5.2">17185</text><text transform="translate(890.1 619.5) rotate(-21)" dy="5.2">17185</text><text transform="translate(890.1 684.5) rotate(-21)" dy="5.2">17185</text><text transform="translate(890.1 749.5) rotate(-21)" dy="5.2">17185</text><text transform="translate(890.1 814.5) rotate(-21)" dy="5.2">17185</text><text transform="translate(890.1 879.5) rotate(-21)" dy="5.2">17185</text><text transform="translate(977.1 64.4) rotate(-21)" dy="5.2">17185</text><text transform="translate(977.1 129.4) rotate(-21)" dy="5.2">17185</text><text transform="translate(977.1 194.4) rotate(-21)" dy="5.2">17185</text><text transform="translate(977.1 259.4) rotate(-21)" dy="5.2">17185</text><text transform="translate(977.1 324.4) rotate(-21)" dy="5.2">17185</text><text transform="translate(977.1 389.4) rotate(-21)" dy="5.2">17185</text><text transform="translate(977.1 454.4) rotate(-21)" dy="5.2">17185</text><text transform="translate(977.1 519.4) rotate(-21)" dy="5.2">17185</text><text transform="translate(977.1 584.4) rotate(-21)" dy="5.2">17185</text><text transform="translate(977.1 649.4) rotate(-21)" dy="5.2">17185</text><text transform="translate(977.1 714.4) rotate(-21)" dy="5.2">17185</text><text transform="translate(977.1 779.4) rotate(-21)" dy="5.2">17185</text><text transform="translate(977.1 844.4) rotate(-21)" dy="5.2">17185</text><text transform="translate(977.1 909.4) rotate(-21)" dy="5.2">17185</text><text transform="translate(1064.0 94.2) rotate(-21)" dy="5.2">17185</text><text transform="translate(1064.0 159.2) rotate(-21)" dy="5.2">17185</text><text transform="translate(1064.0 224.2) rotate(-21)" dy="5.2">17185</text><text transform="translate(1064.0 289.2) rotate(-21)" dy="5.2">17185</text><text transform="translate(1064.0 354.2) rotate(-21)" dy="5.2">17185</text><text transform="translate(1064.0 419.2) rotate(-21)" dy="5.2">17185</text><text transform="translate(1064.0 484.2) rotate(-21)" dy="5.2">17185</text><text transform="translate(1064.0 549.2) rotate(-21)" dy="5.2">17185</text><text transform="translate(1064.0 614.2) rotate(-21)" dy="5.2">17185</text><text transform="translate(1064.0 679.2) rotate(-21)" dy="5.2">17185</text><text transform="translate(1064.0 744.2) rotate(-21)" dy="5.2">17185</text><text transform="translate(1064.0 809.2) rotate(-21)" dy="5.2">17185</text><text transform="translate(1064.0 874.2) rotate(-21)" dy="5.2">17185</text><text transform="translate(1064.0 939.2) rotate(-21)" dy="5.2">17185</text><text transform="translate(1151.0 59.0) rotate(-21)" dy="5.2">17185</text><text transform="translate(1151.0 124.0) rotate(-21)" dy="5.2">17185</text><text transform="translate(1151.0 189.1) rotate(-21)" dy="5.2">17185</text><text transform="translate(1151.0 254.1) rotate(-21)" dy="5.2">17185</text><text transform="translate(1151.0 319.1) rotate(-21)" dy="5.2">17185</text><text transform="translate(1151.0 384.1) rotate(-21)" dy="5.2">17185</text><text transform="translate(1151.0 449.1) rotate(-21)" dy="5.2">17185</text><text transform="translate(1151.0 514.0) rotate(-21)" dy="5.2">17185</text><text transform="translate(1151.0 579.0) rotate(-21)" dy="5.2">17185</text><text transform="translate(1151.0 644.0) rotate(-21)" dy="5.2">17185</text><text transform="translate(1151.0 709.0) rotate(-21)" dy="5.2">17185</text><text transform="translate(1151.0 774.0) rotate(-21)" dy="5.2">17185</text><text transform="translate(1151.0 839.0) rotate(-21)" dy="5.2">17185</text><text transform="translate(1151.0 904.0) rotate(-21)" dy="5.2">17185</text><text transform="translate(1237.9 88.9) rotate(-21)" dy="5.2">17185</text><text transform="translate(1237.9 153.9) rotate(-21)" dy="5.2">17185</text><text transform="translate(1237.9 218.9) rotate(-21)" dy="5.2">17185</text><text transform="translate(1237.9 283.9) rotate(-21)" dy="5.2">17185</text><text transform="translate(1237.9 348.9) rotate(-21)" dy="5.2">17185</text><text transform="translate(1237.9 413.9) rotate(-21)" dy="5.2">17185</text><text transform="translate(1237.9 478.9) rotate(-21)" dy="5.2">17185</text><text transform="translate(1237.9 543.9) rotate(-21)" dy="5.2">17185</text><text transform="translate(1237.9 608.9) rotate(-21)" dy="5.2">17185</text><text transform="translate(1237.9 673.9) rotate(-21)" dy="5.2">17185</text><text transform="translate(1237.9 738.9) rotate(-21)" dy="5.2">17185</text><text transform="translate(1237.9 803.9) rotate(-21)" dy="5.2">17185</text><text transform="translate(1237.9 868.9) rotate(-21)" dy="5.2">17185</text><text transform="translate(1237.9 933.9) rotate(-21)" dy="5.2">17185</text><text transform="translate(1324.8 53.8) rotate(-21)" dy="5.2">17185</text><text transform="translate(1324.8 118.8) rotate(-21)" dy="5.2">17185</text><text transform="translate(1324.8 183.8) rotate(-21)" dy="5.2">17185</text><text transform="translate(1324.8 248.8) rotate(-21)" dy="5.2">17185</text><text transform="translate(1324.8 313.8) rotate(-21)" dy="5.2">17185</text><text transform="translate(1324.8 378.8) rotate(-21)" dy="5.2">17185</text><text transform="translate(1324.8 443.8) rotate(-21)" dy="5.2">17185</text><text transform="translate(1324.8 508.8) rotate(-21)" dy="5.2">17185</text><text transform="translate(1324.8 573.8) rotate(-21)" dy="5.2">17185</text><text transform="translate(1324.8 638.8) rotate(-21)" dy="5.2">17185</text><text transform="translate(1324.8 703.8) rotate(-21)" dy="5.2">17185</text><text transform="translate(1324.8 768.8) rotate(-21)" dy="5.2">17185</text><text transform="translate(1324.8 833.8) rotate(-21)" dy="5.2">17185</text><text transform="translate(1324.8 898.8) rotate(-21)" dy="5.2">17185</text><text transform="translate(1411.8 83.6) rotate(-21)" dy="5.2">17185</text><text transform="translate(1411.8 148.6) rotate(-21)" dy="5.2">17185</text><text transform="translate(1411.8 213.6) rotate(-21)" dy="5.2">17185</text><text transform="translate(1411.8 278.6) rotate(-21)" dy="5.2">17185</text><text transform="translate(1411.8 343.6) rotate(-21)" dy="5.2">17185</text><text transform="translate(1411.8 408.6) rotate(-21)" dy="5.2">17185</text><text transform="translate(1411.8 473.6) rotate(-21)" dy="5.2">17185</text><text transform="translate(1411.8 538.6) rotate(-21)" dy="5.2">17185</text><text transform="translate(1411.8 603.6) rotate(-21)" dy="5.2">17185</text><text transform="translate(1411.8 668.6) rotate(-21)" dy="5.2">17185</text><text transform="translate(1411.8 733.6) rotate(-21)" dy="5.2">17185</text><text transform="translate(1411.8 798.6) rotate(-21)" dy="5.2">17185</text><text transform="translate(1411.8 863.6) rotate(-21)" dy="5.2">17185</text><text transform="translate(1411.8 928.6) rotate(-21)" dy="5.2">17185</text><text transform="translate(1498.8 48.5) rotate(-21)" dy="5.2">17185</text><text transform="translate(1498.8 113.5) rotate(-21)" dy="5.2">17185</text><text transform="translate(1498.8 178.5) rotate(-21)" dy="5.2">17185</text><text transform="translate(1498.8 243.5) rotate(-21)" dy="5.2">17185</text><text transform="translate(1498.8 308.5) rotate(-21)" dy="5.2">17185</text><text transform="translate(1498.8 373.5) rotate(-21)" dy="5.2">17185</text><text transform="translate(1498.8 438.5) rotate(-21)" dy="5.2">17185</text><text transform="translate(1498.8 503.5) rotate(-21)" dy="5.2">17185</text><text transform="translate(1498.8 568.5) rotate(-21)" dy="5.2">17185</text><text transform="translate(1498.8 633.5) rotate(-21)" dy="5.2">17185</text><text transform="translate(1498.8 698.5) rotate(-21)" dy="5.2">17185</text><text transform="translate(1498.8 763.5) rotate(-21)" dy="5.2">17185</text><text transform="translate(1498.8 828.5) rotate(-21)" dy="5.2">17185</text><text transform="translate(1498.8 893.5) rotate(-21)" dy="5.2">17185</text><text transform="translate(1585.7 78.3) rotate(-21)" dy="5.2">17185</text><text transform="translate(1585.7 143.3) rotate(-21)" dy="5.2">17185</text><text transform="translate(1585.7 208.3) rotate(-21)" dy="5.2">17185</text><text transform="translate(1585.7 273.3) rotate(-21)" dy="5.2">17185</text><text transform="translate(1585.7 338.3) rotate(-21)" dy="5.2">17185</text><text transform="translate(1585.7 403.3) rotate(-21)" dy="5.2">17185</text><text transform="translate(1585.7 468.3) rotate(-21)" dy="5.2">17185</text><text transform="translate(1585.7 533.3) rotate(-21)" dy="5.2">17185</text><text transform="translate(1585.7 598.3) rotate(-21)" dy="5.2">17185</text><text transform="translate(1585.7 663.3) rotate(-21)" dy="5.2">17185</text><text transform="translate(1585.7 728.3) rotate(-21)" dy="5.2">17185</text><text transform="translate(1585.7 793.3) rotate(-21)" dy="5.2">17185</text><text transform="translate(1585.7 858.3) rotate(-21)" dy="5.2">17185</text><text transform="translate(1585.7 923.3) rotate(-21)" dy="5.2">17185</text><text transform="translate(1672.7 43.2) rotate(-21)" dy="5.2">17185</text><text transform="translate(1672.7 108.2) rotate(-21)" dy="5.2">17185</text><text transform="translate(1672.7 173.2) rotate(-21)" dy="5.2">17185</text><text transform="translate(1672.7 238.2) rotate(-21)" dy="5.2">17185</text><text transform="translate(1672.7 303.2) rotate(-21)" dy="5.2">17185</text><text transform="translate(1672.7 368.2) rotate(-21)" dy="5.2">17185</text><text transform="translate(1672.7 433.2) rotate(-21)" dy="5.2">17185</text><text transform="translate(1672.7 498.2) rotate(-21)" dy="5.2">17185</text><text transform="translate(1672.7 563.2) rotate(-21)" dy="5.2">17185</text><text transform="translate(1672.7 628.2) rotate(-21)" dy="5.2">17185</text><text transform="translate(1672.7 693.2) rotate(-21)" dy="5.2">17185</text><text transform="translate(1672.7 758.2) rotate(-21)" dy="5.2">17185</text><text transform="translate(1672.7 823.2) rotate(-21)" dy="5.2">17185</text><text transform="translate(1672.7 888.2) rotate(-21)" dy="5.2">17185</text><text transform="translate(1759.6 73.0) rotate(-21)" dy="5.2">17185</text><text transform="translate(1759.6 138.0) rotate(-21)" dy="5.2">17185</text><text transform="translate(1759.6 203.0) rotate(-21)" dy="5.2">17185</text><text transform="translate(1759.6 268.0) rotate(-21)" dy="5.2">17185</text><text transform="translate(1759.6 333.0) rotate(-21)" dy="5.2">17185</text><text transform="translate(1759.6 398.0) rotate(-21)" dy="5.2">17185</text><text transform="translate(1759.6 463.0) rotate(-21)" dy="5.2">17185</text><text transform="translate(1759.6 528.0) rotate(-21)" dy="5.2">17185</text><text transform="translate(1759.6 593.0) rotate(-21)" dy="5.2">17185</text><text transform="translate(1759.6 658.0) rotate(-21)" dy="5.2">17185</text><text transform="translate(1759.6 723.0) rotate(-21)" dy="5.2">17185</text><text transform="translate(1759.6 788.0) rotate(-21)" dy="5.2">17185</text><text transform="translate(1759.6 853.0) rotate(-21)" dy="5.2">17185</text><text transform="translate(1759.6 918.0) rotate(-21)" dy="5.2">17185</text><text transform="translate(1846.6 102.9) rotate(-21)" dy="5.2">17185</text><text transform="translate(1846.6 167.9) rotate(-21)" dy="5.2">17185</text><text transform="translate(1846.6 232.9) rotate(-21)" dy="5.2">17185</text><text transform="translate(1846.6 297.9) rotate(-21)" dy="5.2">17185</text><text transform="translate(1846.6 362.9) rotate(-21)" dy="5.2">17185</text><text transform="translate(1846.6 427.9) rotate(-21)" dy="5.2">17185</text><text transform="translate(1846.6 492.9) rotate(-21)" dy="5.2">17185</text><text transform="translate(1846.6 557.9) rotate(-21)" dy="5.2">17185</text><text transform="translate(1846.6 622.9) rotate(-21)" dy="5.2">17185</text><text transform="translate(1846.6 687.9) rotate(-21)" dy="5.2">17185</text><text transform="translate(1846.6 752.9) rotate(-21)" dy="5.2">17185</text><text transform="translate(1846.6 817.9) rotate(-21)" dy="5.2">17185</text><text transform="translate(1846.6 882.9) rotate(-21)" dy="5.2">17185</text><text transform="translate(1933.5 67.7) rotate(-21)" dy="5.2">17185</text><text transform="translate(1933.5 132.7) rotate(-21)" dy="5.2">17185</text><text transform="translate(1933.5 197.7) rotate(-21)" dy="5.2">17185</text><text transform="translate(1933.5 262.7) rotate(-21)" dy="5.2">17185</text><text transform="translate(1933.5 327.7) rotate(-21)" dy="5.2">17185</text><text transform="translate(1933.5 392.7) rotate(-21)" dy="5.2">17185</text><text transform="translate(1933.5 457.7) rotate(-21)" dy="5.2">17185</text><text transform="translate(1933.5 522.7) rotate(-21)" dy="5.2">17185</text><text transform="translate(1933.5 587.7) rotate(-21)" dy="5.2">17185</text><text transform="translate(1933.5 652.7) rotate(-21)" dy="5.2">17185</text><text transform="translate(1933.5 717.7) rotate(-21)" dy="5.2">17185</text><text transform="translate(1933.5 782.7) rotate(-21)" dy="5.2">17185</text><text transform="translate(1933.5 847.7) rotate(-21)" dy="5.2">17185</text><text transform="translate(1933.5 912.7) rotate(-21)" dy="5.2">17185</text></g></svg></div>
<div id="modal" class="a">
<div class="a" style="left:-444px;top:-67px;width:1920px;height:878px">
<div class="a" style="left:473px;top:101px;font-size:18px;line-height:22px;font-weight:bold;-webkit-text-stroke-width:0;color:#1f1f1f">抓取配置</div>
<svg class="a" style="left:1423px;top:91px" width="16" height="16"><path d="M1.5 1.5 L14.5 14.5 M14.5 1.5 L1.5 14.5" fill="none" stroke="#666" stroke-width="1.5"/></svg>
<div class="a" style="left:473px;top:177px;font-size:16px;line-height:20px;font-weight:bold;-webkit-text-stroke-width:0;color:#1f1f1f;transform:scale(.96);transform-origin:0 0">选择监控时间间隔</div>
<div class="a" style="left:1030px;top:177px;font-size:15px;line-height:20px;color:#808080;letter-spacing:.2px">下次自动抓取时间约：2026-03-09 13:14</div>
<div class="a" style="left:1316px;top:172px;width:81px;height:29px;background:#7065F0;border-radius:2px;box-shadow:0 1px 2px rgba(0,0,0,.15)"></div>
<div class="a" style="left:1316px;top:176px;width:81px;text-align:center;font-size:16px;line-height:20px;font-weight:bold;-webkit-text-stroke-width:0;color:#fff">立即执行</div>
<div class="a" style="left:473px;top:245.5px;width:17px;height:17px;border-radius:50%;background:#7065F0"></div>
<div class="a" style="left:478.5px;top:251px;width:6px;height:6px;border-radius:50%;background:#fff"></div>
<div class="a" style="left:500px;top:234px;font-size:15px;line-height:20px;color:#2a2a2a">2小时</div>
<div class="a" style="left:500px;top:259px;font-size:15px;line-height:20px;color:#999">监控额度：100 个</div>
<div class="a" style="left:677px;top:245.5px;width:17px;height:17px;border-radius:50%;border:1px solid #d4d4d4"></div>
<div class="a" style="left:704px;top:234px;font-size:15px;line-height:20px;color:#2a2a2a">3小时</div>
<div class="a" style="left:704px;top:259px;font-size:15px;line-height:20px;color:#999">150 个</div>
<div class="a" style="left:804px;top:245.5px;width:17px;height:17px;border-radius:50%;border:1px solid #d4d4d4"></div>
<div class="a" style="left:831px;top:234px;font-size:15px;line-height:20px;color:#2a2a2a">4小时</div>
<div class="a" style="left:831px;top:259px;font-size:15px;line-height:20px;color:#999">200 个</div>
<div class="a" style="left:930px;top:245.5px;width:17px;height:17px;border-radius:50%;border:1px solid #d4d4d4"></div>
<div class="a" style="left:957px;top:234px;font-size:15px;line-height:20px;color:#2a2a2a">6小时</div>
<div class="a" style="left:957px;top:259px;font-size:15px;line-height:20px;color:#999">250 个</div>
<div class="a" style="left:1057px;top:245.5px;width:17px;height:17px;border-radius:50%;border:1px solid #d4d4d4"></div>
<div class="a" style="left:1084px;top:234px;font-size:15px;line-height:20px;color:#2a2a2a">8小时</div>
<div class="a" style="left:1084px;top:259px;font-size:15px;line-height:20px;color:#999">300 个</div>
<div class="a" style="left:1183px;top:245.5px;width:17px;height:17px;border-radius:50%;border:1px solid #d4d4d4"></div>
<div class="a" style="left:1210px;top:234px;font-size:15px;line-height:20px;color:#2a2a2a">12小时</div>
<div class="a" style="left:1210px;top:259px;font-size:15px;line-height:20px;color:#999">400 个</div>
<div class="a" style="left:1312px;top:245.5px;width:17px;height:17px;border-radius:50%;border:1px solid #d4d4d4"></div>
<div class="a" style="left:1339px;top:234px;font-size:15px;line-height:20px;color:#2a2a2a">24小时</div>
<div class="a" style="left:1339px;top:259px;font-size:15px;line-height:20px;color:#999">500 个</div>
<div class="a" style="left:473px;top:337px;font-size:16px;line-height:20px;font-weight:bold;-webkit-text-stroke-width:0;color:#1f1f1f;transform:scale(.97);transform-origin:0 0">配置抓取数据站点邮编</div>
<div class="a" style="left:473px;top:387px;width:924px;height:63px;background:#fafafa"></div>
<div class="a" style="left:473px;top:450px;width:924px;height:1px;background:#ececec"></div>
<div class="a" style="left:493px;top:409px;font-size:15px;line-height:20px;color:#707070">站点</div>
<div class="a" style="left:717px;top:409px;font-size:15px;line-height:20px;color:#707070">邮编</div>
<div class="a" style="left:992px;top:409px;font-size:15px;line-height:20px;color:#707070">地址</div>
<div class="a" style="left:1295px;top:409px;font-size:15px;line-height:20px;color:#707070">操作</div>
<div class="a" style="left:697px;top:407px;width:1px;height:23px;background:#e6e6e6"></div>
<div class="a" style="left:971px;top:407px;width:1px;height:23px;background:#e6e6e6"></div>
<div class="a" style="left:1221px;top:407px;width:1px;height:23px;background:#e6e6e6"></div>
<div class="a" style="left:473px;top:451px;width:912px;height:348px;overflow:hidden">
<div class="a" style="left:-473px;top:-451px;width:1920px;height:878px">
<svg class="a" style="left:492px;top:482.0px" width="19" height="13" viewBox="0 0 19 13"><rect width="19" height="13" fill="#fff"/><g fill="#c4203a"><rect y="0" width="19" height="1"/><rect y="2" width="19" height="1"/><rect y="4" width="19" height="1"/><rect y="6" width="19" height="1"/><rect y="8" width="19" height="1"/><rect y="10" width="19" height="1"/><rect y="12" width="19" height="1"/></g><rect width="8" height="7" fill="#1c4a8a"/></svg>
<div class="a" style="left:518px;top:481.0px;font-size:15px;line-height:20px;transform:scale(.96);transform-origin:0 0;color:#7c7f86">美国站</div>
<div class="a inp" style="left:717px;top:471.0px;width:222px"><span>94305</span></div>
<div class="a" style="left:992px;top:481.0px;font-size:15px;line-height:20px;transform:scale(.96);transform-origin:0 0;color:#7c7f86">斯坦福大学</div>
<div class="a" style="left:1260.5px;top:481.0px;font-size:15px;line-height:20px;transform:scale(.96);transform-origin:0 0;color:#7065F0">保存</div>
<div class="a" style="left:1301px;top:481.0px;font-size:15px;line-height:20px;transform:scale(.96);transform-origin:0 0;color:#7065F0">历史邮编</div>
<div class="a" style="left:473px;top:527.5px;width:912px;height:1px;background:#ececec"></div>
<svg class="a" style="left:492px;top:559.5px" width="19" height="13" viewBox="0 0 19 13"><rect width="6.3" height="13" fill="#1a7040"/><rect x="6.3" width="6.4" height="13" fill="#fff"/><rect x="12.7" width="6.3" height="13" fill="#d22035"/><circle cx="9.5" cy="6.5" r="1.6" fill="#d9b54a"/></svg>
<div class="a" style="left:518px;top:558.5px;font-size:15px;line-height:20px;transform:scale(.96);transform-origin:0 0;color:#7c7f86">墨西哥</div>
<div class="a inp" style="left:717px;top:548.5px;width:222px"><span>04510</span></div>
<div class="a" style="left:992px;top:558.5px;font-size:15px;line-height:20px;transform:scale(.96);transform-origin:0 0;color:#7c7f86">墨西哥国立自治大学</div>
<div class="a" style="left:1260.5px;top:558.5px;font-size:15px;line-height:20px;transform:scale(.96);transform-origin:0 0;color:#7065F0">保存</div>
<div class="a" style="left:1301px;top:558.5px;font-size:15px;line-height:20px;transform:scale(.96);transform-origin:0 0;color:#7065F0">历史邮编</div>
<div class="a" style="left:473px;top:605.0px;width:912px;height:1px;background:#ececec"></div>
<svg class="a" style="left:492px;top:637.0px" width="19" height="13" viewBox="0 0 19 13"><rect width="19" height="13" fill="#fff"/><rect width="4.8" height="13" fill="#e03a2e"/><rect x="14.2" width="4.8" height="13" fill="#e03a2e"/><path d="M9.5 2.5 L10.5 4.5 L12 4 L11.3 7 L12.5 6.8 L11.8 8.5 L10 8.5 L10 10.5 L9 10.5 L9 8.5 L7.2 8.5 L6.5 6.8 L7.7 7 L7 4 L8.5 4.5 Z" fill="#e03a2e"/></svg>
<div class="a" style="left:518px;top:636.0px;font-size:15px;line-height:20px;transform:scale(.96);transform-origin:0 0;color:#7c7f86">加拿大</div>
<div class="a inp" style="left:717px;top:626.0px;width:96px"><span>M5S</span></div>
<div class="a inp" style="left:844px;top:626.0px;width:96px"><span>1A1</span></div>
<div class="a" style="left:992px;top:636.0px;font-size:15px;line-height:20px;transform:scale(.96);transform-origin:0 0;color:#7c7f86">多伦多大学</div>
<div class="a" style="left:1260.5px;top:636.0px;font-size:15px;line-height:20px;transform:scale(.96);transform-origin:0 0;color:#7065F0">保存</div>
<div class="a" style="left:1301px;top:636.0px;font-size:15px;line-height:20px;transform:scale(.96);transform-origin:0 0;color:#7065F0">历史邮编</div>
<div class="a" style="left:473px;top:682.5px;width:912px;height:1px;background:#ececec"></div>
<svg class="a" style="left:492px;top:714.5px" width="19" height="13" viewBox="0 0 19 13"><rect width="19" height="13" fill="#1c9a3e"/><path d="M9.5 1.5 L17 6.5 L9.5 11.5 L2 6.5 Z" fill="#f5d110"/><circle cx="9.5" cy="6.5" r="2.8" fill="#2a3f8f"/></svg>
<div class="a" style="left:518px;top:713.5px;font-size:15px;line-height:20px;transform:scale(.96);transform-origin:0 0;color:#7c7f86">巴西</div>
<div class="a inp" style="left:717px;top:703.5px;width:96px"><span>05508</span></div>
<div class="a inp" style="left:844px;top:703.5px;width:96px"><span>070</span></div>
<div class="a" style="left:825px;top:712.0px;font-size:15px;line-height:20px;color:#333">-</div>
<div class="a" style="left:992px;top:713.5px;font-size:15px;line-height:20px;transform:scale(.96);transform-origin:0 0;color:#7c7f86">圣保罗大学</div>
<div class="a" style="left:1260.5px;top:713.5px;font-size:15px;line-height:20px;transform:scale(.96);transform-origin:0 0;color:#7065F0">保存</div>
<div class="a" style="left:1301px;top:713.5px;font-size:15px;line-height:20px;transform:scale(.96);transform-origin:0 0;color:#7065F0">历史邮编</div>
<div class="a" style="left:473px;top:760.0px;width:912px;height:1px;background:#ececec"></div>
<svg class="a" style="left:492px;top:792.0px" width="19" height="13" viewBox="0 0 19 13"><rect width="19" height="13" fill="#243a7a"/><path d="M0 0 L19 13 M19 0 L0 13" stroke="#fff" stroke-width="2.6"/><path d="M0 0 L19 13 M19 0 L0 13" stroke="#c8202f" stroke-width="1"/><path d="M9.5 0 V13 M0 6.5 H19" stroke="#fff" stroke-width="3.6"/><path d="M9.5 0 V13 M0 6.5 H19" stroke="#c8202f" stroke-width="2"/></svg>
<div class="a" style="left:518px;top:791.0px;font-size:15px;line-height:20px;transform:scale(.96);transform-origin:0 0;color:#7c7f86">英国站</div>
<div class="a inp" style="left:717px;top:781.0px;width:96px"><span>OX1</span></div>
<div class="a inp" style="left:844px;top:781.0px;width:96px"><span>2JD</span></div>
<div class="a" style="left:825px;top:789.5px;font-size:15px;line-height:20px;color:#333">-</div>
<div class="a" style="left:992px;top:791.0px;font-size:15px;line-height:20px;transform:scale(.96);transform-origin:0 0;color:#7c7f86">牛津大学</div>
<div class="a" style="left:1260.5px;top:791.0px;font-size:15px;line-height:20px;transform:scale(.96);transform-origin:0 0;color:#7065F0">保存</div>
<div class="a" style="left:1301px;top:791.0px;font-size:15px;line-height:20px;transform:scale(.96);transform-origin:0 0;color:#7065F0">历史邮编</div>
</div></div>
<div class="a" style="left:1385px;top:450px;width:12px;height:349px;background:linear-gradient(90deg,#f0f0f0,#e6e6e6)"></div>
<div class="a" style="left:1385px;top:451px;width:12px;height:92px;background:#c1c1c1;border-radius:6px"></div>
<div class="a" style="left:473px;top:799px;width:912px;height:12px;background:#ececec"></div>
<div class="a" style="left:473px;top:799px;width:900px;height:12px;background:#bdbdbd;border-radius:6px"></div>
<div class="a" style="left:1385px;top:799px;width:12px;height:12px;background:#7065F0"></div>
<div class="a" style="left:698px;top:454px;width:253px;height:303px;border:4px solid #F04848;border-radius:10px"></div>
<svg class="a" style="left:1180px;top:488px" width="84" height="56" viewBox="1180 488 84 56"><path d="M1185 538.5 L1235 507 L1230 502 L1259 495 L1244 518 L1239 512 L1186 539.5 Z" fill="#F04848" stroke="#F04848" stroke-width="1" stroke-linejoin="round"/></svg>
</div><div class="a" style="left:0;top:25px;width:1020px;height:758px;overflow:hidden"><svg class="a" style="left:-444px;top:-92px;pointer-events:none" width="1920" height="878" viewBox="0 0 1920 878"><g font-family="Liberation Mono" font-size="15" fill="rgba(0,0,0,0.035)" text-anchor="middle"><text transform="translate(455.4 80.2) rotate(-21)" dy="5.2">17185</text><text transform="translate(455.4 145.2) rotate(-21)" dy="5.2">17185</text><text transform="translate(455.4 210.2) rotate(-21)" dy="5.2">17185</text><text transform="translate(455.4 275.2) rotate(-21)" dy="5.2">17185</text><text transform="translate(455.4 340.2) rotate(-21)" dy="5.2">17185</text><text transform="translate(455.4 405.2) rotate(-21)" dy="5.2">17185</text><text transform="translate(455.4 470.2) rotate(-21)" dy="5.2">17185</text><text transform="translate(455.4 535.2) rotate(-21)" dy="5.2">17185</text><text transform="translate(455.4 600.2) rotate(-21)" dy="5.2">17185</text><text transform="translate(455.4 665.2) rotate(-21)" dy="5.2">17185</text><text transform="translate(455.4 730.2) rotate(-21)" dy="5.2">17185</text><text transform="translate(455.4 795.2) rotate(-21)" dy="5.2">17185</text><text transform="translate(455.4 860.2) rotate(-21)" dy="5.2">17185</text><text transform="translate(455.4 925.2) rotate(-21)" dy="5.2">17185</text><text transform="translate(542.3 110.1) rotate(-21)" dy="5.2">17185</text><text transform="translate(542.3 175.1) rotate(-21)" dy="5.2">17185</text><text transform="translate(542.3 240.1) rotate(-21)" dy="5.2">17185</text><text transform="translate(542.3 305.1) rotate(-21)" dy="5.2">17185</text><text transform="translate(542.3 370.1) rotate(-21)" dy="5.2">17185</text><text transform="translate(542.3 435.1) rotate(-21)" dy="5.2">17185</text><text transform="translate(542.3 500.1) rotate(-21)" dy="5.2">17185</text><text transform="translate(542.3 565.1) rotate(-21)" dy="5.2">17185</text><text transform="translate(542.3 630.1) rotate(-21)" dy="5.2">17185</text><text transform="translate(542.3 695.1) rotate(-21)" dy="5.2">17185</text><text transform="translate(542.3 760.1) rotate(-21)" dy="5.2">17185</text><text transform="translate(542.3 825.1) rotate(-21)" dy="5.2">17185</text><text transform="translate(542.3 890.1) rotate(-21)" dy="5.2">17185</text><text transform="translate(629.2 74.9) rotate(-21)" dy="5.2">17185</text><text transform="translate(629.2 139.9) rotate(-21)" dy="5.2">17185</text><text transform="translate(629.2 204.9) rotate(-21)" dy="5.2">17185</text><text transform="translate(629.2 269.9) rotate(-21)" dy="5.2">17185</text><text transform="translate(629.2 334.9) rotate(-21)" dy="5.2">17185</text><text transform="translate(629.2 399.9) rotate(-21)" dy="5.2">17185</text><text transform="translate(629.2 464.9) rotate(-21)" dy="5.2">17185</text><text transform="translate(629.2 530.0) rotate(-21)" dy="5.2">17185</text><text transform="translate(629.2 595.0) rotate(-21)" dy="5.2">17185</text><text transform="translate(629.2 660.0) rotate(-21)" dy="5.2">17185</text><text transform="translate(629.2 725.0) rotate(-21)" dy="5.2">17185</text><text transform="translate(629.2 790.0) rotate(-21)" dy="5.2">17185</text><text transform="translate(629.2 855.0) rotate(-21)" dy="5.2">17185</text><text transform="translate(629.2 920.0) rotate(-21)" dy="5.2">17185</text><text transform="translate(716.2 104.8) rotate(-21)" dy="5.2">17185</text><text transform="translate(716.2 169.8) rotate(-21)" dy="5.2">17185</text><text transform="translate(716.2 234.8) rotate(-21)" dy="5.2">17185</text><text transform="translate(716.2 299.8) rotate(-21)" dy="5.2">17185</text><text transform="translate(716.2 364.8) rotate(-21)" dy="5.2">17185</text><text transform="translate(716.2 429.8) rotate(-21)" dy="5.2">17185</text><text transform="translate(716.2 494.8) rotate(-21)" dy="5.2">17185</text><text transform="translate(716.2 559.8) rotate(-21)" dy="5.2">17185</text><text transform="translate(716.2 624.8) rotate(-21)" dy="5.2">17185</text><text transform="translate(716.2 689.8) rotate(-21)" dy="5.2">17185</text><text transform="translate(716.2 754.8) rotate(-21)" dy="5.2">17185</text><text transform="translate(716.2 819.8) rotate(-21)" dy="5.2">17185</text><text transform="translate(716.2 884.8) rotate(-21)" dy="5.2">17185</text><text transform="translate(803.2 69.7) rotate(-21)" dy="5.2">17185</text><text transform="translate(803.2 134.7) rotate(-21)" dy="5.2">17185</text><text transform="translate(803.2 199.7) rotate(-21)" dy="5.2">17185</text><text transform="translate(803.2 264.6) rotate(-21)" dy="5.2">17185</text><text transform="translate(803.2 329.6) rotate(-21)" dy="5.2">17185</text><text transform="translate(803.2 394.6) rotate(-21)" dy="5.2">17185</text><text transform="translate(803.2 459.6) rotate(-21)" dy="5.2">17185</text><text transform="translate(803.2 524.6) rotate(-21)" dy="5.2">17185</text><text transform="translate(803.2 589.6) rotate(-21)" dy="5.2">17185</text><text transform="translate(803.2 654.6) rotate(-21)" dy="5.2">17185</text><text transform="translate(803.2 719.6) rotate(-21)" dy="5.2">17185</text><text transform="translate(803.2 784.6) rotate(-21)" dy="5.2">17185</text><text transform="translate(803.2 849.6) rotate(-21)" dy="5.2">17185</text><text transform="translate(803.2 914.6) rotate(-21)" dy="5.2">17185</text><text transform="translate(890.1 99.5) rotate(-21)" dy="5.2">17185</text><text transform="translate(890.1 164.5) rotate(-21)" dy="5.2">17185</text><text transform="translate(890.1 229.5) rotate(-21)" dy="5.2">17185</text><text transform="translate(890.1 294.5) rotate(-21)" dy="5.2">17185</text><text transform="translate(890.1 359.5) rotate(-21)" dy="5.2">17185</text><text transform="translate(890.1 424.5) rotate(-21)" dy="5.2">17185</text><text transform="translate(890.1 489.5) rotate(-21)" dy="5.2">17185</text><text transform="translate(890.1 554.5) rotate(-21)" dy="5.2">17185</text><text transform="translate(890.1 619.5) rotate(-21)" dy="5.2">17185</text><text transform="translate(890.1 684.5) rotate(-21)" dy="5.2">17185</text><text transform="translate(890.1 749.5) rotate(-21)" dy="5.2">17185</text><text transform="translate(890.1 814.5) rotate(-21)" dy="5.2">17185</text><text transform="translate(890.1 879.5) rotate(-21)" dy="5.2">17185</text><text transform="translate(977.1 64.4) rotate(-21)" dy="5.2">17185</text><text transform="translate(977.1 129.4) rotate(-21)" dy="5.2">17185</text><text transform="translate(977.1 194.4) rotate(-21)" dy="5.2">17185</text><text transform="translate(977.1 259.4) rotate(-21)" dy="5.2">17185</text><text transform="translate(977.1 324.4) rotate(-21)" dy="5.2">17185</text><text transform="translate(977.1 389.4) rotate(-21)" dy="5.2">17185</text><text transform="translate(977.1 454.4) rotate(-21)" dy="5.2">17185</text><text transform="translate(977.1 519.4) rotate(-21)" dy="5.2">17185</text><text transform="translate(977.1 584.4) rotate(-21)" dy="5.2">17185</text><text transform="translate(977.1 649.4) rotate(-21)" dy="5.2">17185</text><text transform="translate(977.1 714.4) rotate(-21)" dy="5.2">17185</text><text transform="translate(977.1 779.4) rotate(-21)" dy="5.2">17185</text><text transform="translate(977.1 844.4) rotate(-21)" dy="5.2">17185</text><text transform="translate(977.1 909.4) rotate(-21)" dy="5.2">17185</text><text transform="translate(1064.0 94.2) rotate(-21)" dy="5.2">17185</text><text transform="translate(1064.0 159.2) rotate(-21)" dy="5.2">17185</text><text transform="translate(1064.0 224.2) rotate(-21)" dy="5.2">17185</text><text transform="translate(1064.0 289.2) rotate(-21)" dy="5.2">17185</text><text transform="translate(1064.0 354.2) rotate(-21)" dy="5.2">17185</text><text transform="translate(1064.0 419.2) rotate(-21)" dy="5.2">17185</text><text transform="translate(1064.0 484.2) rotate(-21)" dy="5.2">17185</text><text transform="translate(1064.0 549.2) rotate(-21)" dy="5.2">17185</text><text transform="translate(1064.0 614.2) rotate(-21)" dy="5.2">17185</text><text transform="translate(1064.0 679.2) rotate(-21)" dy="5.2">17185</text><text transform="translate(1064.0 744.2) rotate(-21)" dy="5.2">17185</text><text transform="translate(1064.0 809.2) rotate(-21)" dy="5.2">17185</text><text transform="translate(1064.0 874.2) rotate(-21)" dy="5.2">17185</text><text transform="translate(1064.0 939.2) rotate(-21)" dy="5.2">17185</text><text transform="translate(1151.0 124.0) rotate(-21)" dy="5.2">17185</text><text transform="translate(1151.0 189.1) rotate(-21)" dy="5.2">17185</text><text transform="translate(1151.0 254.1) rotate(-21)" dy="5.2">17185</text><text transform="translate(1151.0 319.1) rotate(-21)" dy="5.2">17185</text><text transform="translate(1151.0 384.1) rotate(-21)" dy="5.2">17185</text><text transform="translate(1151.0 449.1) rotate(-21)" dy="5.2">17185</text><text transform="translate(1151.0 514.0) rotate(-21)" dy="5.2">17185</text><text transform="translate(1151.0 579.0) rotate(-21)" dy="5.2">17185</text><text transform="translate(1151.0 644.0) rotate(-21)" dy="5.2">17185</text><text transform="translate(1151.0 709.0) rotate(-21)" dy="5.2">17185</text><text transform="translate(1151.0 774.0) rotate(-21)" dy="5.2">17185</text><text transform="translate(1151.0 839.0) rotate(-21)" dy="5.2">17185</text><text transform="translate(1151.0 904.0) rotate(-21)" dy="5.2">17185</text><text transform="translate(1237.9 88.9) rotate(-21)" dy="5.2">17185</text><text transform="translate(1237.9 153.9) rotate(-21)" dy="5.2">17185</text><text transform="translate(1237.9 218.9) rotate(-21)" dy="5.2">17185</text><text transform="translate(1237.9 283.9) rotate(-21)" dy="5.2">17185</text><text transform="translate(1237.9 348.9) rotate(-21)" dy="5.2">17185</text><text transform="translate(1237.9 413.9) rotate(-21)" dy="5.2">17185</text><text transform="translate(1237.9 478.9) rotate(-21)" dy="5.2">17185</text><text transform="translate(1237.9 543.9) rotate(-21)" dy="5.2">17185</text><text transform="translate(1237.9 608.9) rotate(-21)" dy="5.2">17185</text><text transform="translate(1237.9 673.9) rotate(-21)" dy="5.2">17185</text><text transform="translate(1237.9 738.9) rotate(-21)" dy="5.2">17185</text><text transform="translate(1237.9 803.9) rotate(-21)" dy="5.2">17185</text><text transform="translate(1237.9 868.9) rotate(-21)" dy="5.2">17185</text><text transform="translate(1237.9 933.9) rotate(-21)" dy="5.2">17185</text><text transform="translate(1324.8 118.8) rotate(-21)" dy="5.2">17185</text><text transform="translate(1324.8 183.8) rotate(-21)" dy="5.2">17185</text><text transform="translate(1324.8 248.8) rotate(-21)" dy="5.2">17185</text><text transform="translate(1324.8 313.8) rotate(-21)" dy="5.2">17185</text><text transform="translate(1324.8 378.8) rotate(-21)" dy="5.2">17185</text><text transform="translate(1324.8 443.8) rotate(-21)" dy="5.2">17185</text><text transform="translate(1324.8 508.8) rotate(-21)" dy="5.2">17185</text><text transform="translate(1324.8 573.8) rotate(-21)" dy="5.2">17185</text><text transform="translate(1324.8 638.8) rotate(-21)" dy="5.2">17185</text><text transform="translate(1324.8 703.8) rotate(-21)" dy="5.2">17185</text><text transform="translate(1324.8 768.8) rotate(-21)" dy="5.2">17185</text><text transform="translate(1324.8 833.8) rotate(-21)" dy="5.2">17185</text><text transform="translate(1324.8 898.8) rotate(-21)" dy="5.2">17185</text><text transform="translate(1411.8 83.6) rotate(-21)" dy="5.2">17185</text><text transform="translate(1411.8 148.6) rotate(-21)" dy="5.2">17185</text><text transform="translate(1411.8 213.6) rotate(-21)" dy="5.2">17185</text><text transform="translate(1411.8 278.6) rotate(-21)" dy="5.2">17185</text><text transform="translate(1411.8 343.6) rotate(-21)" dy="5.2">17185</text><text transform="translate(1411.8 408.6) rotate(-21)" dy="5.2">17185</text><text transform="translate(1411.8 473.6) rotate(-21)" dy="5.2">17185</text><text transform="translate(1411.8 538.6) rotate(-21)" dy="5.2">17185</text><text transform="translate(1411.8 603.6) rotate(-21)" dy="5.2">17185</text><text transform="translate(1411.8 668.6) rotate(-21)" dy="5.2">17185</text><text transform="translate(1411.8 733.6) rotate(-21)" dy="5.2">17185</text><text transform="translate(1411.8 798.6) rotate(-21)" dy="5.2">17185</text><text transform="translate(1411.8 863.6) rotate(-21)" dy="5.2">17185</text><text transform="translate(1411.8 928.6) rotate(-21)" dy="5.2">17185</text><text transform="translate(1498.8 113.5) rotate(-21)" dy="5.2">17185</text><text transform="translate(1498.8 178.5) rotate(-21)" dy="5.2">17185</text><text transform="translate(1498.8 243.5) rotate(-21)" dy="5.2">17185</text><text transform="translate(1498.8 308.5) rotate(-21)" dy="5.2">17185</text><text transform="translate(1498.8 373.5) rotate(-21)" dy="5.2">17185</text><text transform="translate(1498.8 438.5) rotate(-21)" dy="5.2">17185</text><text transform="translate(1498.8 503.5) rotate(-21)" dy="5.2">17185</text><text transform="translate(1498.8 568.5) rotate(-21)" dy="5.2">17185</text><text transform="translate(1498.8 633.5) rotate(-21)" dy="5.2">17185</text><text transform="translate(1498.8 698.5) rotate(-21)" dy="5.2">17185</text><text transform="translate(1498.8 763.5) rotate(-21)" dy="5.2">17185</text><text transform="translate(1498.8 828.5) rotate(-21)" dy="5.2">17185</text><text transform="translate(1498.8 893.5) rotate(-21)" dy="5.2">17185</text></g></svg></div>
</div>
<div id="sb" class="a"></div>
<div id="sbthumb" class="a"></div>
<div id="topline" class="a"></div>
</body></html>
